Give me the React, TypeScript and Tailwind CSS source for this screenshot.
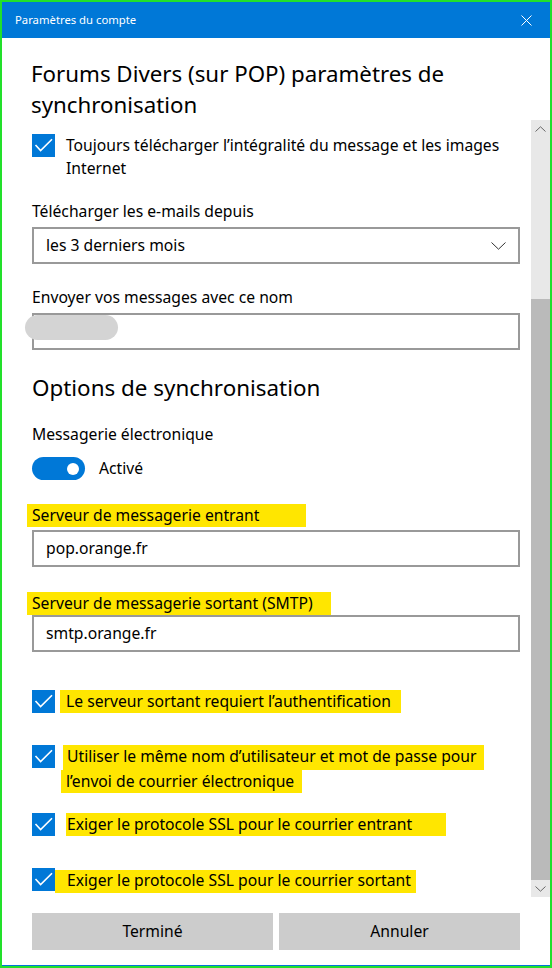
import React from "react";

const font = { fontFamily: '"Noto Sans", "Open Sans", sans-serif' };

function Check() {
  return (
    <div className="w-[23px] h-[23px] bg-[#0078d7] shrink-0 flex items-center justify-center">
      <svg width="23" height="23" viewBox="0 0 23 23" fill="none">
        <path d="M3.5 11 L8.6 16.6 L20 5.2" stroke="white" strokeWidth="1.6" fill="none" />
      </svg>
    </div>
  );
}

function HLRow({ children, hlClass, mt }: { children: React.ReactNode; hlClass: string; mt: string }) {
  return (
    <div className={`flex items-start ${mt}`}>
      <Check />
      <div className={`h-[23px] leading-[23px] bg-[#ffe600] whitespace-nowrap ${hlClass}`}>{children}</div>
    </div>
  );
}

export default function App() {
  return (
    <div className="w-[552px] h-[968px] bg-[#22e02a] pl-[2px] pr-[2px] pt-[2px] pb-[2px]" style={font}>
      <div className="w-full h-full bg-white flex flex-col border-b border-[#0078d7] text-black">
        {/* Title bar */}
        <div className="h-[36px] bg-[#0078d7] flex items-center justify-between pl-[13px] pr-[18px] shrink-0">
          <span className="text-white text-[11.3px]">Paramètres du compte</span>
          <svg width="11" height="11" viewBox="0 0 11 11">
            <path d="M0.5 0.5 L10.5 10.5 M10.5 0.5 L0.5 10.5" stroke="white" strokeWidth="1" />
          </svg>
        </div>
        {/* Heading */}
        <div className="pl-[29px] pt-[20px] h-[82px] shrink-0">
          <h1 className="text-[22.3px] leading-[31px]">
            Forums Divers (sur POP) paramètres de
            <br />
            synchronisation
          </h1>
        </div>
        {/* Scroll area */}
        <div className="flex h-[777px] shrink-0 overflow-hidden">
          <div className="flex-1 pl-[30px] pr-[11px] pt-[14px] text-[15.7px]">
            <div className="flex items-start">
              <Check />
              <div className="ml-[11px] leading-[23px]">
                Toujours télécharger l’intégralité du message et les images Internet
              </div>
            </div>
            <div className="mt-[20px] leading-[22px]">Télécharger les e-mails depuis</div>
            <div className="mt-[5px] h-[37px] border-2 border-[#999999] flex items-center justify-between pl-[12px] pr-[12px]">
              <span>les 3 derniers mois</span>
              <svg width="15" height="8" viewBox="0 0 15 8">
                <path d="M0.5 0.5 L7.5 7.2 L14.5 0.5" stroke="#333" strokeWidth="1" fill="none" />
              </svg>
            </div>
            <div className="mt-[22px] leading-[22px]">Envoyer vos messages avec ce nom</div>
            <div className="mt-[5px] h-[37px] border-2 border-[#999999] relative">
              <div className="absolute left-[-9px] top-[0px] w-[93px] h-[25px] rounded-full bg-[#d4d4d4]" />
            </div>
            <h2 className="mt-[23px] text-[22.4px] leading-[30px]">Options de synchronisation</h2>
            <div className="mt-[20px] leading-[22px]">Messagerie électronique</div>
            <div className="mt-[12px] flex items-center h-[23px]">
              <div className="w-[53px] h-[23px] rounded-full bg-[#0078d7] flex items-center justify-end pr-[6px]">
                <div className="w-[12px] h-[12px] rounded-full bg-white" />
              </div>
              <span className="ml-[14px]">Activé</span>
            </div>
            <div className="mt-[24px] ml-[-5px] w-[279px] h-[23px] leading-[23px] pl-[5px] bg-[#ffe600] whitespace-nowrap">
              Serveur de messagerie entrant
            </div>
            <div className="mt-[3px] h-[37px] border-2 border-[#999999] flex items-center pl-[12px]">
              pop.orange.fr
            </div>
            <div className="mt-[25px] ml-[-5px] w-[304px] h-[23px] leading-[23px] pl-[5px] bg-[#ffe600] whitespace-nowrap">
              Serveur de messagerie sortant (SMTP)
            </div>
            <div className="h-[37px] border-2 border-[#999999] flex items-center pl-[12px]">
              smtp.orange.fr
            </div>

            <HLRow mt="mt-[38px]" hlClass="ml-[5px] w-[341px] pl-[6px]">
              Le serveur sortant requiert l’authentification
            </HLRow>

            <div className="flex items-start mt-[32px]">
              <Check />
              <div className="flex flex-col">
                <div className="ml-[8px] w-[421px] h-[25px] leading-[23px] pl-[4px] bg-[#ffe600] whitespace-nowrap">
                  Utiliser le même nom d’utilisateur et mot de passe pour
                </div>
                <div className="ml-[6px] w-[241px] h-[23px] leading-[23px] pl-[5px] bg-[#ffe600] whitespace-nowrap">
                  l’envoi de courrier électronique
                </div>
              </div>
            </div>

            <HLRow mt="mt-[20px]" hlClass="ml-[11px] w-[380px] pl-[1px]">
              Exiger le protocole SSL pour le courrier entrant
            </HLRow>

            <div className="flex items-start mt-[32px]">
              <Check />
              <div className="mt-[2px] w-[361px] h-[23px] leading-[21px] pl-[12px] bg-[#ffe600] whitespace-nowrap">
                Exiger le protocole SSL pour le courrier sortant
              </div>
            </div>
          </div>
          {/* Scrollbar */}
          <div className="w-[19px] bg-[#e8e8e8] flex flex-col shrink-0">
            <div className="h-[17px] flex items-center justify-center">
              <svg width="11" height="6" viewBox="0 0 11 6">
                <path d="M0.5 5.5 L5.5 0.8 L10.5 5.5" stroke="#666" strokeWidth="1" fill="none" />
              </svg>
            </div>
            <div className="h-[162px]" />
            <div className="flex-1 bg-[#bababa]" />
            <div className="h-[17px] flex items-center justify-center">
              <svg width="11" height="6" viewBox="0 0 11 6">
                <path d="M0.5 0.5 L5.5 5.2 L10.5 0.5" stroke="#666" strokeWidth="1" fill="none" />
              </svg>
            </div>
          </div>
        </div>
        {/* Buttons */}
        <div className="flex gap-[6px] pl-[30px] pr-[30px] pt-[16px]">
          <button className="w-[241px] h-[37px] bg-[#cccccc] text-[15.7px]">Terminé</button>
          <button className="w-[241px] h-[37px] bg-[#cccccc] text-[15.7px]">Annuler</button>
        </div>
      </div>
    </div>
  );
}
